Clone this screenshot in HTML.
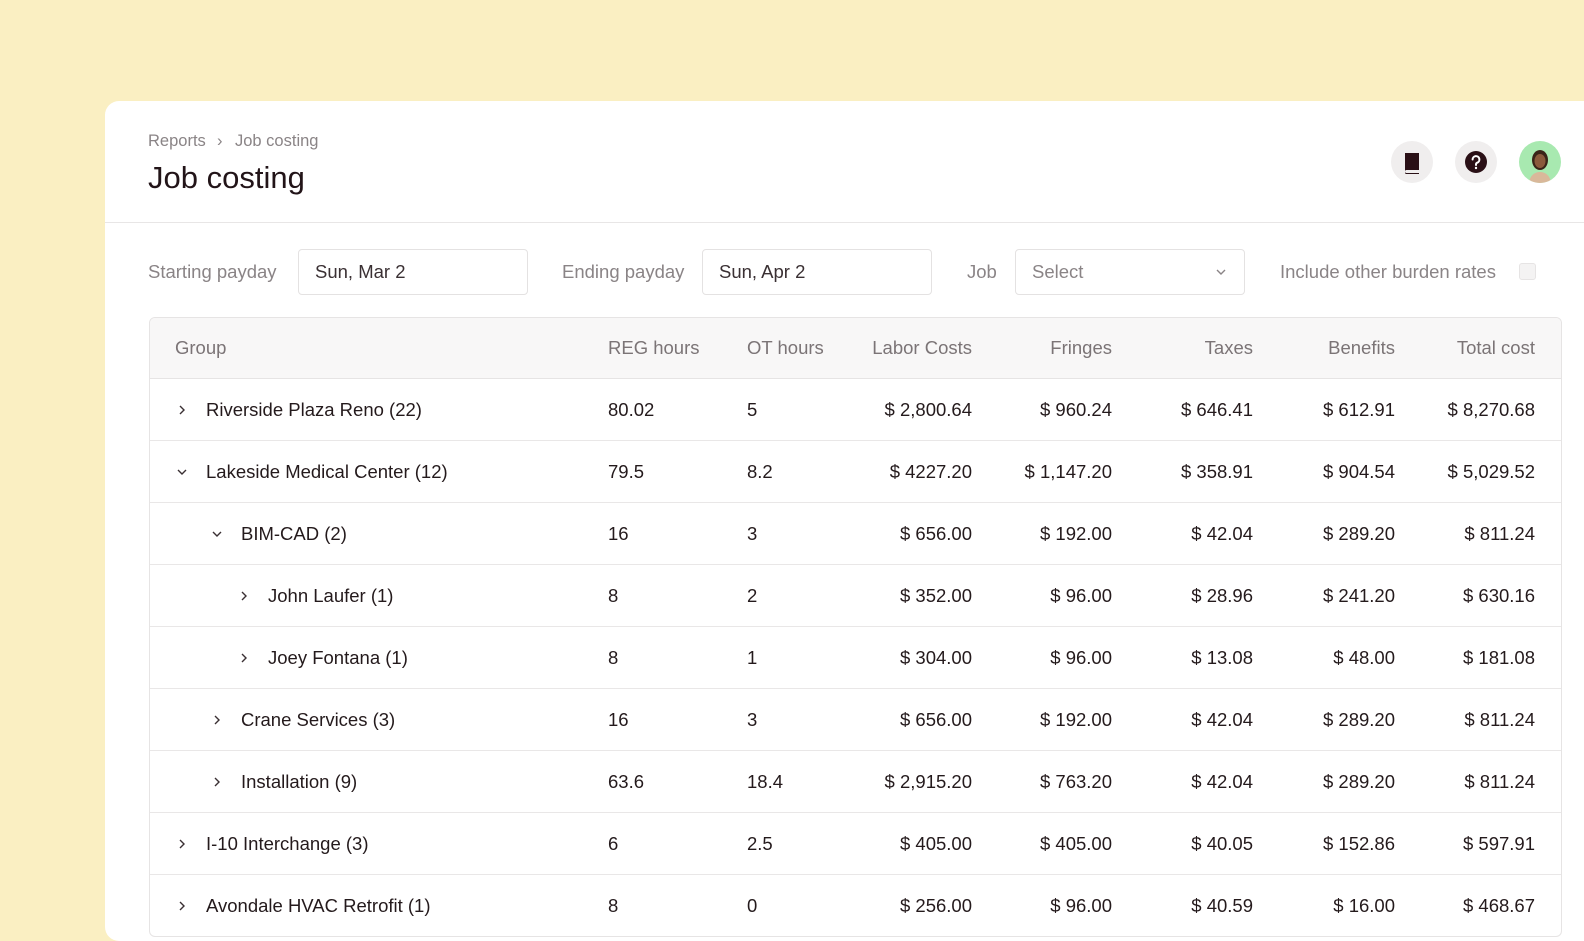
<!DOCTYPE html>
<html><head><meta charset="utf-8"><style>
*{margin:0;padding:0;box-sizing:border-box}
body{width:1584px;height:918px;overflow:hidden;background:#faefc2;font-family:"Liberation Sans",sans-serif;position:relative;color:#241a1c}
.card{position:absolute;left:105px;top:101px;width:1500px;height:840px;background:#fff;border-radius:14px}
.a{position:absolute;white-space:nowrap}
.crumb{font-size:16.5px;color:#8a8486;top:132px}
.title{left:148px;top:160px;font-size:31px;color:#221418}
.hline{position:absolute;left:105px;top:222px;width:1479px;height:1px;background:#e8e6e6}
.ic{position:absolute;width:42px;height:42px;border-radius:50%;background:#f0eeee;top:141px}
.lbl{font-size:18.5px;color:#8a8486;top:261px}
.inp{position:absolute;top:249px;height:46px;width:230px;border:1px solid #e4e2e2;border-radius:4px;font-size:18.5px;color:#3a3033;padding:11px 16px}
.tbl{position:absolute;left:149px;top:317px;width:1413px;height:620px;border:1px solid #e6e4e4;border-radius:6px;overflow:hidden}
.th{position:absolute;left:0;top:0;width:100%;height:61px;background:#f8f7f7;border-bottom:1px solid #e6e4e4}
.row{position:absolute;left:0;width:100%;height:62px;border-bottom:1px solid #e9e7e7}
.c{position:absolute;font-size:18.5px;white-space:nowrap;top:20px}
.h .c{color:#7b7476;top:19px}
.r{text-align:right}
.chev{position:absolute;top:23px;width:16px;height:16px}
</style></head><body>
<div class="card"></div>
<div class="a crumb" style="left:148px">Reports</div>
<div class="a crumb" style="left:217px">›</div>
<div class="a crumb" style="left:235px">Job costing</div>
<div class="a title">Job costing</div>
<div class="ic" style="left:1391px"><svg width="42" height="42" viewBox="0 0 42 42"><path d="M14 12h14v17H15.5a1.5 1.5 0 0 0 0 3H28v1H15a1.5 1.5 0 0 1-1-1.5z" fill="#2a1016"/></svg></div>
<div class="ic" style="left:1455px"><svg width="42" height="42" viewBox="0 0 42 42"><circle cx="21" cy="21" r="11" fill="#2a1016"/><path d="M17.6 18.5a3.4 3.4 0 1 1 4.6 3.2c-.8.4-1.2.9-1.2 1.8v.5" stroke="#fff" stroke-width="2" fill="none" stroke-linecap="round"/><circle cx="21" cy="27" r="1.2" fill="#fff"/></svg></div>
<div class="ic" style="left:1519px;background:#a8e9b0;overflow:hidden"><svg width="42" height="42" viewBox="0 0 42 42"><path d="M10 42c1-8 6-11 11-11s10 3 11 11z" fill="#d9b89a"/><ellipse cx="21" cy="19" rx="8" ry="10" fill="#3a2418"/><ellipse cx="21" cy="20" rx="5.5" ry="7" fill="#8a5a3c"/></svg></div>
<div class="hline"></div>
<div class="a lbl" style="left:148px">Starting payday</div>
<div class="inp" style="left:298px">Sun, Mar 2</div>
<div class="a lbl" style="left:562px">Ending payday</div>
<div class="inp" style="left:702px">Sun, Apr 2</div>
<div class="a lbl" style="left:967px">Job</div>
<div class="inp" style="left:1015px;color:#8a8486">Select<svg style="position:absolute;right:18px;top:18px" width="10" height="8" viewBox="0 0 10 8"><path d="M1 2l4 4 4-4" stroke="#8a8486" stroke-width="1.4" fill="none"/></svg></div>
<div class="a lbl" style="left:1280px">Include other burden rates</div>
<div class="a" style="left:1519px;top:263px;width:17px;height:17px;border:1px solid #e6e4e4;background:#f4f3f3;border-radius:3px"></div>
<div class="tbl">
<div class="th h">
<div class="c" style="left:25px">Group</div><div class="c" style="left:458px">REG hours</div><div class="c" style="left:597px">OT hours</div>
<div class="c r" style="right:589px">Labor Costs</div><div class="c r" style="right:449px">Fringes</div><div class="c r" style="right:308px">Taxes</div><div class="c r" style="right:166px">Benefits</div><div class="c r" style="right:26px">Total cost</div>
</div>
<div id="rows"></div>
</div>
<script>
var d=[[0,'r','Riverside Plaza Reno (22)','80.02','5','2,800.64','960.24','646.41','612.91','8,270.68'],
[0,'d','Lakeside Medical Center (12)','79.5','8.2','4227.20','1,147.20','358.91','904.54','5,029.52'],
[1,'d','BIM-CAD (2)','16','3','656.00','192.00','42.04','289.20','811.24'],
[2,'r','John Laufer (1)','8','2','352.00','96.00','28.96','241.20','630.16'],
[2,'r','Joey Fontana (1)','8','1','304.00','96.00','13.08','48.00','181.08'],
[1,'r','Crane Services (3)','16','3','656.00','192.00','42.04','289.20','811.24'],
[1,'r','Installation (9)','63.6','18.4','2,915.20','763.20','42.04','289.20','811.24'],
[0,'r','I-10 Interchange (3)','6','2.5','405.00','405.00','40.05','152.86','597.91'],
[0,'r','Avondale HVAC Retrofit (1)','8','0','256.00','96.00','40.59','16.00','468.67']];
var ind=[0,35,62],h='';
d.forEach(function(r,i){var x=ind[r[0]];
var ch=r[1]=='r'?'<path d="M6 4l4 4-4 4"/>':'<path d="M4 6l4 4 4-4"/>';
h+='<div class="row" style="top:'+(61+i*62)+'px"><svg class="chev" style="left:'+(24+x)+'px" viewBox="0 0 16 16" fill="none" stroke="#3a3033" stroke-width="1.4">'+ch+'</svg>'+
'<div class="c" style="left:'+(56+x)+'px">'+r[2]+'</div><div class="c" style="left:458px">'+r[3]+'</div><div class="c" style="left:597px">'+r[4]+'</div>'+
'<div class="c r" style="right:589px">$ '+r[5]+'</div><div class="c r" style="right:449px">$ '+r[6]+'</div><div class="c r" style="right:308px">$ '+r[7]+'</div><div class="c r" style="right:166px">$ '+r[8]+'</div><div class="c r" style="right:26px">$ '+r[9]+'</div></div>';});
document.getElementById('rows').innerHTML=h;
</script>
</body></html>
